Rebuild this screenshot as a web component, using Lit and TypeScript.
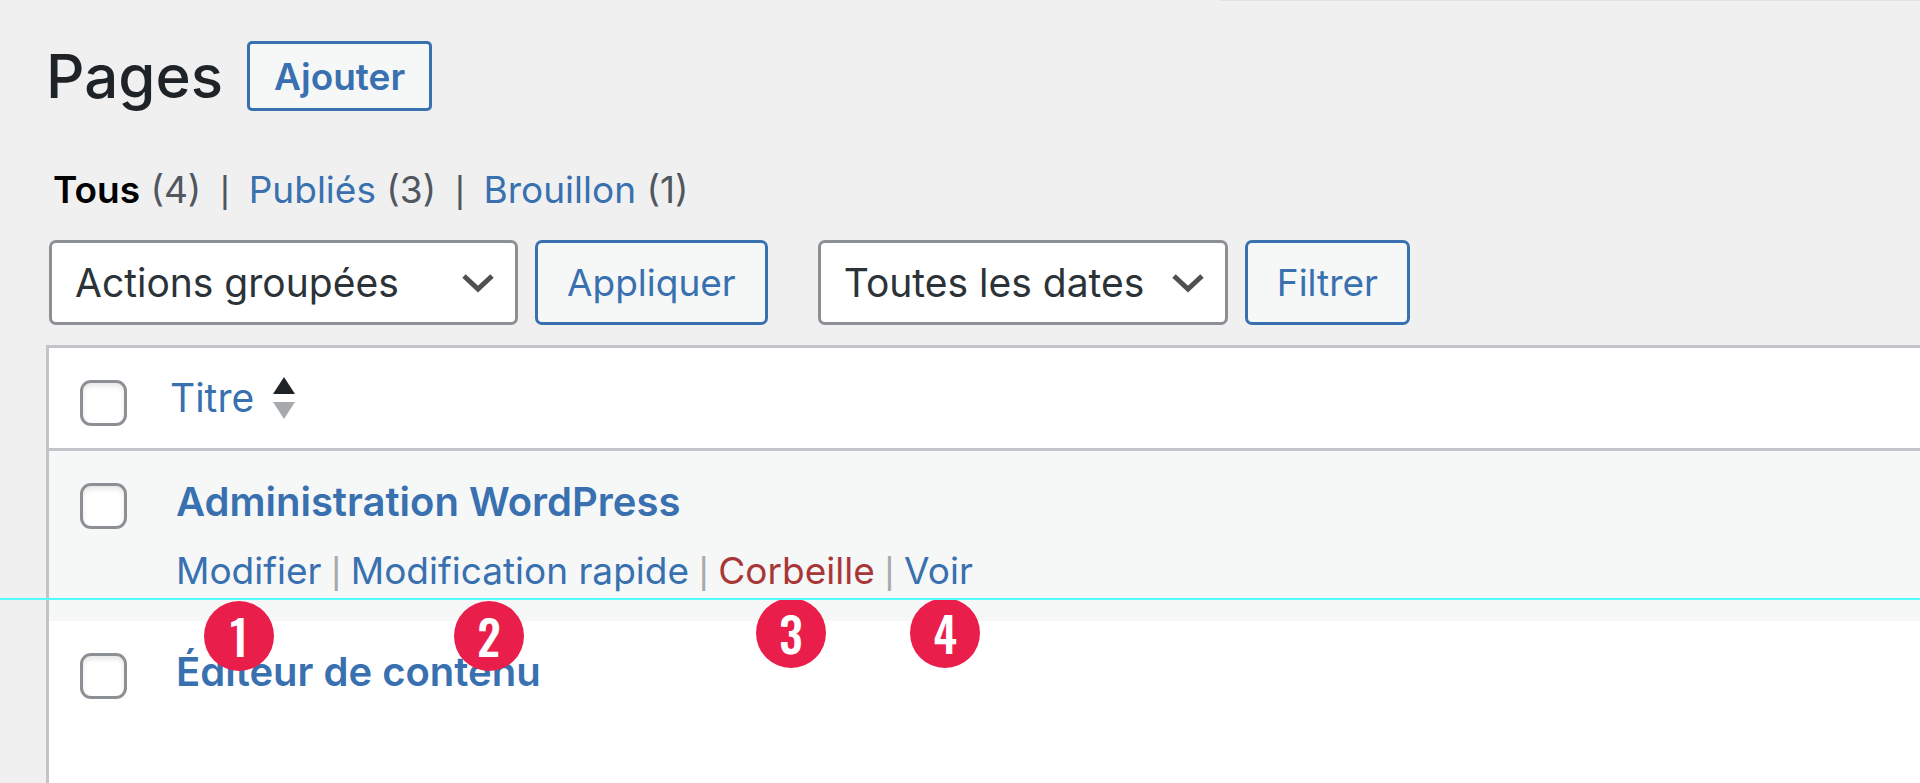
import { LitElement, html, css } from "lit";
import { customElement } from "lit/decorators.js";
import { styleMap } from "lit/directives/style-map.js";

interface Pin {
  label: number;
  x: number;
  y: number;
}

const PINS: Pin[] = [
  { label: 1, x: 204, y: 601 },
  { label: 2, x: 454, y: 601 },
  { label: 3, x: 756, y: 598 },
  { label: 4, x: 910, y: 598 },
];

const chevron = html`<svg class="chevron" viewBox="0 0 32 20" aria-hidden="true">
  <path d="M2 3 L16 16 L30 3" fill="none" stroke="#505050" stroke-width="5" />
</svg>`;

@customElement("app-root")
export class AppRoot extends LitElement {
  static styles = css`
    :host {
      display: flex;
      flex-direction: column;
      position: relative;
      box-sizing: border-box;
      min-height: 100vh;
      padding-left: 46px;
      overflow: hidden;
      background: #f0f0f0;
      color: #50575e;
      font-family: Inter, "Liberation Sans", sans-serif;
      font-size: 37px;
    }
    * {
      box-sizing: border-box;
    }
    a {
      color: #3870b0;
      text-decoration: none;
    }
    .topline {
      align-self: flex-end;
      width: calc(100% - 1174px);
      height: 1px;
      background: #e3e3e4;
    }
    .heading {
      display: flex;
      align-items: center;
      gap: 24px;
      margin-top: 40px;
    }
    h1 {
      margin: 0;
      color: #1d2327;
      font-size: 60px;
      font-weight: 500;
      line-height: 70px;
    }
    .button {
      font: inherit;
      display: flex;
      align-items: center;
      justify-content: center;
      color: #3870b0;
      background: #f6f7f7;
      border: 3px solid #3870b0;
      border-radius: 7px;
    }
    .add {
      height: 70px;
      padding: 0 24px;
      font-weight: 600;
      border-radius: 5px;
    }
    .views {
      display: flex;
      gap: 19px;
      margin: 54px 0 0;
      padding: 0 0 0 7px;
      list-style: none;
      line-height: 50px;
    }
    .views li {
      display: flex;
      gap: 19px;
    }
    .bar {
      font-family: "Liberation Sans", sans-serif;
      font-size: 36px;
    }
    .current {
      color: #000;
      font-weight: 600;
    }
    .toolbar {
      display: flex;
      gap: 17px;
      margin-top: 25px;
      padding-left: 3px;
    }
    .group {
      display: flex;
      gap: 17px;
      margin-right: 33px;
    }
    .picker {
      display: grid;
      align-items: center;
    }
    .picker select,
    .chevron {
      grid-area: 1 / 1;
    }
    .picker select {
      appearance: none;
      height: 85px;
      padding: 0 60px 0 23px;
      font: inherit;
      font-size: 39px;
      color: #2c3338;
      background: #fff;
      border: 3px solid #8c8f94;
      border-radius: 7px;
    }
    .bulk {
      width: 469px;
    }
    .dates {
      width: 410px;
    }
    .chevron {
      justify-self: end;
      width: 32px;
      height: 20px;
      margin-right: 24px;
      pointer-events: none;
    }
    .toolbar .button {
      height: 85px;
      padding: 0 29px;
    }
    .list {
      flex: 1;
      margin-top: 20px;
      background: #fff;
      border: solid #c3c4c7;
      border-width: 3px 0 0 3px;
    }
    table {
      width: 100%;
      border-spacing: 0;
    }
    th,
    td {
      padding: 0;
      vertical-align: top;
      text-align: left;
      font-weight: 400;
    }
    .check {
      width: 121px;
      padding: 32px 0 0 31px;
    }
    thead .check,
    thead .title {
      border-bottom: 3px solid #c3c4c7;
    }
    thead .title {
      height: 103px;
      padding-top: 25px;
      font-size: 39px;
      line-height: 50px;
    }
    tbody .title {
      padding: 26px 0 0 6px;
    }
    .hovered {
      height: 170px;
      background: #f6f7f7;
    }
    input {
      appearance: none;
      display: block;
      width: 47px;
      height: 46px;
      margin: 0;
      background: #fff;
      border: 3px solid #8c8f94;
      border-radius: 11px;
      box-shadow: inset 0 3px 5px rgba(0, 0, 0, 0.1);
    }
    .sort {
      display: inline-flex;
      align-items: center;
      gap: 18px;
    }
    .arrows {
      width: 24px;
      height: 42px;
    }
    .name {
      display: block;
      font-size: 40px;
      font-weight: 600;
      line-height: 50px;
    }
    .actions {
      display: flex;
      gap: 10px;
      margin-top: 19px;
      line-height: 50px;
      color: #a7aaad;
    }
    .actions .trash {
      color: #a93636;
    }
    .guide {
      position: absolute;
      top: 598px;
      left: 0;
      right: 0;
      height: 2px;
      background: #5ff;
    }
    .pin {
      position: absolute;
      display: flex;
      align-items: center;
      justify-content: center;
      width: 70px;
      height: 70px;
      border-radius: 50%;
      background: #e91e4a;
      color: #fff;
      font-family: "Oswald", "Liberation Sans Narrow", "Open Sans Condensed", "Roboto Condensed", Roboto, sans-serif;
      font-size: 47px;
      font-weight: 500;
      line-height: 70px;
    }
  `;

  render() {
    return html`
      <div class="topline"></div>
      <header class="heading">
        <h1>Pages</h1>
        <button class="button add">Ajouter</button>
      </header>
      <ul class="views">
        <li><span><a class="current" href="#">Tous</a> (4)</span><span class="bar">|</span></li>
        <li><span><a href="#">Publiés</a> (3)</span><span class="bar">|</span></li>
        <li><span><a href="#">Brouillon</a> (1)</span></li>
      </ul>
      <div class="toolbar">
        <div class="group">
          <div class="picker">
            <select class="bulk" aria-label="Actions groupées"><option>Actions groupées</option></select>
            ${chevron}
          </div>
          <button class="button">Appliquer</button>
        </div>
        <div class="picker">
          <select class="dates" aria-label="Toutes les dates"><option>Toutes les dates</option></select>
          ${chevron}
        </div>
        <button class="button">Filtrer</button>
      </div>
      <div class="list">
        <table>
          <thead>
            <tr>
              <th class="check"><input type="checkbox" aria-label="Tout sélectionner" /></th>
              <th class="title" scope="col">
                <a class="sort" href="#">
                  <span>Titre</span>
                  <svg class="arrows" viewBox="0 0 24 42" aria-hidden="true">
                    <path d="M12 0 L23 17 H1 Z" fill="#1d2327" />
                    <path d="M12 42 L1 25 H23 Z" fill="#a7aaad" />
                  </svg>
                </a>
              </th>
            </tr>
          </thead>
          <tbody>
            <tr class="hovered">
              <td class="check"><input type="checkbox" aria-label="Administration WordPress" /></td>
              <td class="title">
                <a class="name" href="#">Administration WordPress</a>
                <div class="actions">
                  <a href="#">Modifier</a><span class="bar">|</span>
                  <a href="#">Modification rapide</a><span class="bar">|</span>
                  <a class="trash" href="#">Corbeille</a><span class="bar">|</span>
                  <a href="#">Voir</a>
                </div>
              </td>
            </tr>
            <tr>
              <td class="check"><input type="checkbox" aria-label="Éditeur de contenu" /></td>
              <td class="title"><a class="name" href="#">Éditeur de contenu</a></td>
            </tr>
          </tbody>
        </table>
      </div>
      ${PINS.map(
        (pin) => html`<span class="pin" style=${styleMap({ left: `${pin.x}px`, top: `${pin.y}px` })}>${pin.label}</span>`
      )}
      <div class="guide"></div>
    `;
  }
}
